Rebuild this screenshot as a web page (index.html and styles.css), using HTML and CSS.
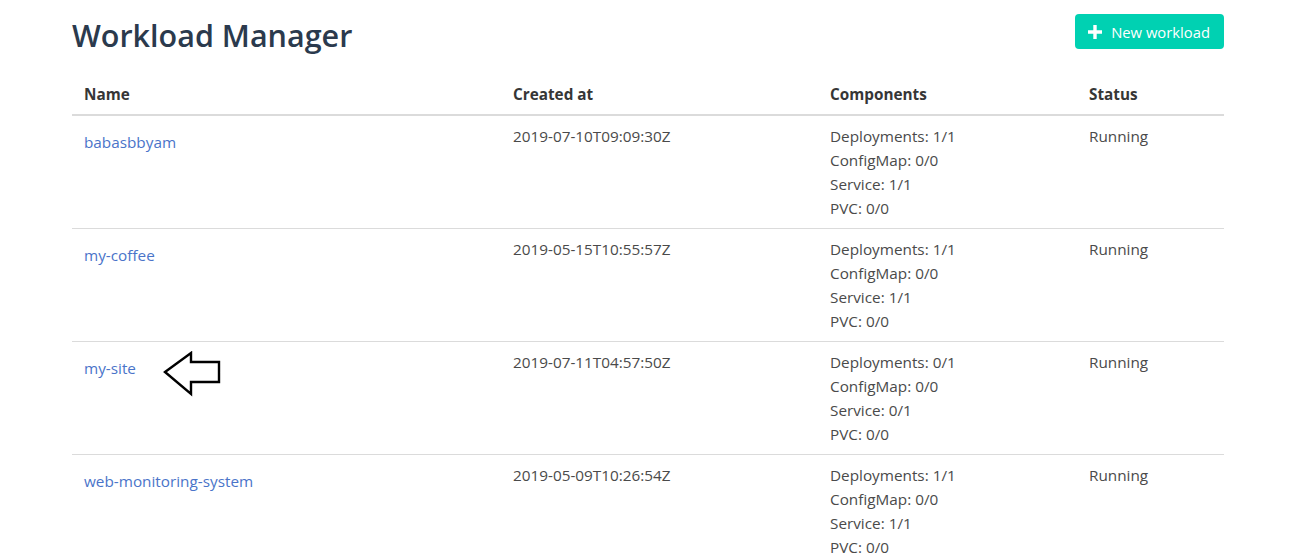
FILE: index.html
```html
<!DOCTYPE html>
<html>
<head>
<meta charset="utf-8">
<link rel="stylesheet" href="styles.css">
</head>
<body>
<div class="container">
  <div class="header">
    <h1 class="title">Workload Manager</h1>
    <button class="btn-new"><svg class="plus" width="14" height="14" viewBox="0 0 14 14"><path d="M5.3 0h3.4v5.3H14v3.4H8.7V14H5.3V8.7H0V5.3h5.3z" fill="#fff"/></svg>New workload</button>
  </div>
  <table class="table">
    <thead>
      <tr><th class="c-name">Name</th><th class="c-date">Created at</th><th class="c-comp">Components</th><th>Status</th></tr>
    </thead>
    <tbody>
      <tr>
        <td><a class="link" href="#">babasbbyam</a></td>
        <td>2019-07-10T09:09:30Z</td>
        <td>Deployments: 1/1<br>ConfigMap: 0/0<br>Service: 1/1<br>PVC: 0/0</td>
        <td>Running</td>
      </tr>
      <tr>
        <td><a class="link" href="#">my-coffee</a></td>
        <td>2019-05-15T10:55:57Z</td>
        <td>Deployments: 1/1<br>ConfigMap: 0/0<br>Service: 1/1<br>PVC: 0/0</td>
        <td>Running</td>
      </tr>
      <tr>
        <td class="cell-rel"><a class="link" href="#">my-site</a>
          <svg class="arrow" width="60" height="48" viewBox="0 0 60 48"><polygon points="3,21 29,2 29,11 57,11 57,31 29,31 29,43" fill="#fff" stroke="#000" stroke-width="2.4" stroke-linejoin="miter"/></svg>
        </td>
        <td>2019-07-11T04:57:50Z</td>
        <td>Deployments: 0/1<br>ConfigMap: 0/0<br>Service: 0/1<br>PVC: 0/0</td>
        <td>Running</td>
      </tr>
      <tr>
        <td><a class="link" href="#">web-monitoring-system</a></td>
        <td>2019-05-09T10:26:54Z</td>
        <td>Deployments: 1/1<br>ConfigMap: 0/0<br>Service: 1/1<br>PVC: 0/0</td>
        <td>Running</td>
      </tr>
    </tbody>
  </table>
</div>
</body>
</html>
```
FILE: styles.css
```css
html, body {
  margin: 0;
  padding: 0;
  background: #fff;
}
body {
  font-family: "Open Sans", "Noto Sans", sans-serif;
  font-size: 15.3px;
  color: #4a4a4a;
}
.container {
  width: 1152px;
  margin-left: 72px;
}
.header {
  display: flex;
  justify-content: space-between;
  align-items: flex-start;
  padding-top: 14px;
  height: 64px;
  box-sizing: border-box;
}
.title {
  margin: 0;
  margin-top: 1px;
  font-size: 30.5px;
  font-weight: 600;
  line-height: 40px;
  color: #2b3a4d;
}
.btn-new {
  display: flex;
  align-items: center;
  gap: 9px;
  height: 35px;
  padding: 0 14px 0 13px;
  background: #00d1b2;
  color: #fff;
  border: none;
  border-radius: 4px;
  font-family: "Open Sans", "Noto Sans", sans-serif;
  font-size: 14.8px;
  cursor: pointer;
}
.plus { display: block; }
.table {
  width: 100%;
  border-collapse: collapse;
}
.table th {
  text-align: left;
  font-weight: 700;
  color: #363636;
  padding: 18px 12px 8px;
  line-height: 24px;
  border-bottom: 2px solid #dbdbdb;
}
.c-name { width: 405px; }
.c-date { width: 293px; }
.c-comp { width: 235px; }
.table td {
  vertical-align: top;
  padding: 8px 12px;
  line-height: 24px;
  border-bottom: 1px solid #dbdbdb;
}
.link {
  display: inline-block;
  margin-top: 6px;
  color: #4a74c9;
  text-decoration: none;
}
.cell-rel { position: relative; }
.arrow {
  position: absolute;
  left: 90px;
  top: 9px;
}
```
